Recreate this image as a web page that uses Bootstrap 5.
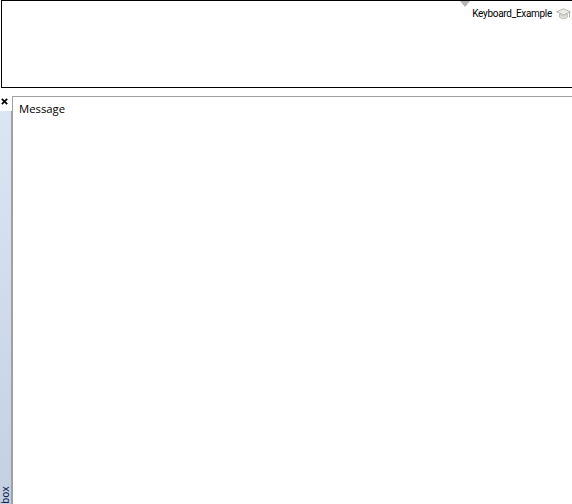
<!DOCTYPE html>
<html lang="en">
<head>
<meta charset="utf-8">
<title>Keyboard Example</title>
<link href="https://cdn.jsdelivr.net/npm/bootstrap@5.3.0/dist/css/bootstrap.min.css" rel="stylesheet">
<style>
html, body { height: 504px; overflow: hidden; background: #fff; }
body { font-family: "Liberation Sans", Arial, sans-serif; font-size: 11px; color: #000; }
.top-pane { height: 88px; margin-left: 1px; border: 1px solid #000; border-right: 0; padding-right: 1px; }
.top-pin { width: 0; height: 0; border-left: 5px solid transparent; border-right: 5px solid transparent; border-top: 6px solid #b5b5b5; margin-right: 101px; }
.top-row { gap: 4px; }
.top-label { font-family: Roboto, "Liberation Sans", sans-serif; font-size: 10px; letter-spacing: -.3px; line-height: 14px; }
.lower { height: 416px; }
.side-rail { width: 12px; }
.close-x { margin: 10px 0 0 1px; }
.side-tab { width: 12px; margin-top: 6px; background: linear-gradient(180deg, #dbe6f4, #c3d0e2); border-right: 1px solid #a0a0a0; }
.tab-text { writing-mode: vertical-rl; transform: rotate(180deg); font-family: "DejaVu Sans", sans-serif; color: #0a1a50; font-size: 10px; line-height: 11px; white-space: nowrap; }
.msg-pane { border-top: 1px solid #a0a0a0; border-left: 1px solid #a0a0a0; margin-top: 8px; }
.msg-head { padding: 3px 0 0 6px; font-family: "Open Sans", "Liberation Sans", sans-serif; font-size: 11.3px; line-height: 17px; color: #000; }
</style>
</head>
<body class="d-flex flex-column">
<div class="top-pane d-flex flex-column align-items-end">
  <div class="top-pin"></div>
  <div class="top-row d-flex align-items-center">
    <span class="top-label">Keyboard_Example</span>
    <svg width="15" height="12" viewBox="0 0 15 12" aria-hidden="true"><path d="M7.5 .8 14.5 3.8 7.5 6.8 .5 3.8Z" fill="#ecece8" stroke="#a9a9a2" stroke-width=".8"/><path d="M3.5 6v3.2c1.5 1.8 6.5 1.8 8 0V6L7.5 7.8Z" fill="#dededa" stroke="#b0b0aa" stroke-width=".7"/><path d="M13.5 4.3V9.5" stroke="#aaaaa4" fill="none"/></svg>
  </div>
</div>
<div class="lower d-flex">
  <div class="side-rail d-flex flex-column flex-shrink-0">
    <svg class="close-x flex-shrink-0" width="7" height="7" viewBox="0 0 7 7" aria-hidden="true"><path d="M.8.8 6.2 6.2M6.2.8.8 6.2" stroke="#000" stroke-width="1.7" fill="none"/></svg>
    <div class="side-tab flex-grow-1 d-flex align-items-end justify-content-center"><span class="tab-text">box</span></div>
  </div>
  <div class="msg-pane flex-grow-1">
    <div class="msg-head">Message</div>
  </div>
</div>
<script src="https://cdn.jsdelivr.net/npm/bootstrap@5.3.0/dist/js/bootstrap.bundle.min.js"></script>
</body>
</html>
